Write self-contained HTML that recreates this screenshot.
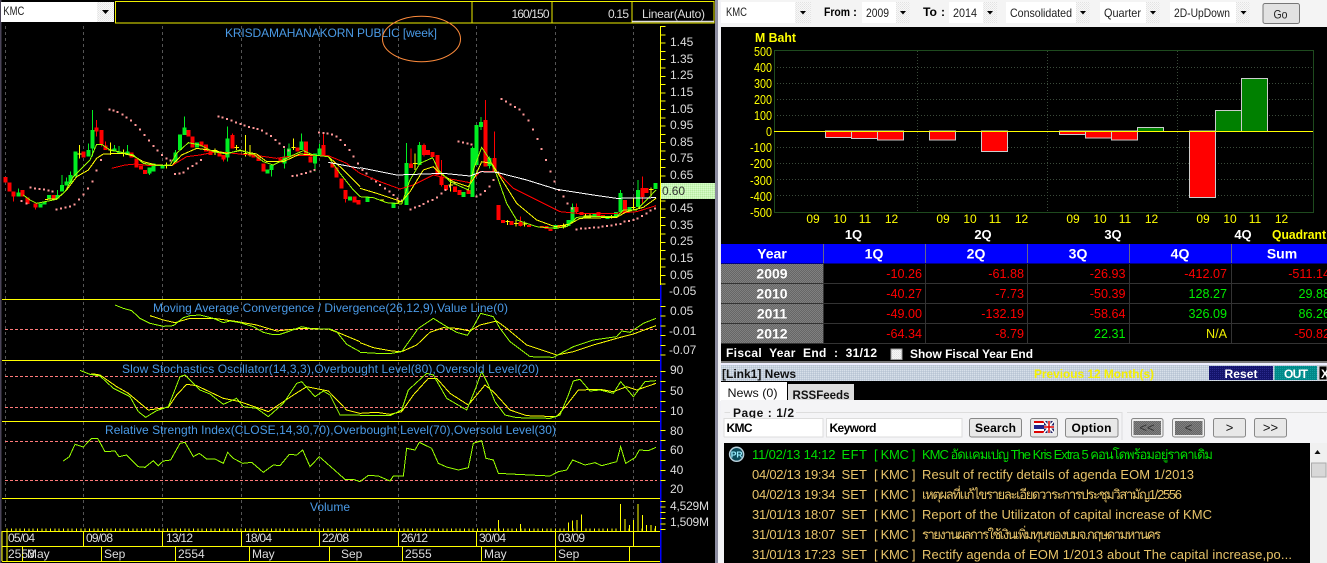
<!DOCTYPE html>
<html><head><meta charset="utf-8"><style>
html,body{margin:0;padding:0;background:#000;width:1327px;height:563px;overflow:hidden}
svg{display:block}
text{font-family:"Liberation Sans","Noto Sans CJK SC","DejaVu Sans",sans-serif;white-space:pre}
.t{fill:#4a9ae6;font-size:12px}
.a{fill:#ddd;font-size:12px}
.d{fill:#ddd;font-size:12px}
.y{fill:#ff0;font-size:13px}
.yb{fill:#ff0;font-size:12.5px;font-weight:bold}
.w{fill:#fff;font-size:14px;font-weight:bold;text-anchor:middle}
.w2{fill:#fff;font-size:13px;font-weight:bold;text-anchor:middle}
.k{fill:#222;font-size:12px}
.kb{fill:#000;font-size:12px;font-weight:bold}
.r{fill:#f00;font-size:12.6px;text-anchor:end}
.g{fill:#0e0;font-size:12.6px;text-anchor:end}
.n{fill:#e8c46a;font-size:13px}
.ng{fill:#0d0;font-size:13px}
</style></head><body>
<svg xmlns="http://www.w3.org/2000/svg" width="1327" height="563" viewBox="0 0 1327 563">
<defs>
<pattern id="gr" width="2" height="2" patternUnits="userSpaceOnUse"><rect width="2" height="2" fill="#666"/><rect width="1" height="1" fill="#808080"/><rect x="1" y="1" width="1" height="1" fill="#808080"/></pattern>
<pattern id="lg" width="2" height="2" patternUnits="userSpaceOnUse"><rect width="2" height="2" fill="#c8f5b8"/><rect width="1" height="1" fill="#b8eca0"/><rect x="1" y="1" width="1" height="1" fill="#d8fcc8"/></pattern>
<pattern id="bar" width="2" height="2" patternUnits="userSpaceOnUse"><rect width="2" height="2" fill="#c4cfdc"/><rect width="1" height="1" fill="#d8e0ea"/><rect x="1" y="1" width="1" height="1" fill="#b8c4d4"/></pattern>
<pattern id="cb" width="2" height="2" patternUnits="userSpaceOnUse"><rect width="2" height="2" fill="#f8f8f8"/><rect width="1" height="1" fill="#e2e2e2"/><rect x="1" y="1" width="1" height="1" fill="#eaeaea"/></pattern>
<pattern id="nv" width="2" height="2" patternUnits="userSpaceOnUse"><rect width="2" height="2" fill="#14146c"/><rect width="1" height="1" fill="#2a2a8c"/></pattern>
<pattern id="tl" width="2" height="2" patternUnits="userSpaceOnUse"><rect width="2" height="2" fill="#008888"/><rect width="1" height="1" fill="#10a0a0"/></pattern>
</defs>
<rect width="1327" height="563" fill="#000"/>
<!-- left top -->
<rect x="0" y="0" width="1.5" height="563" fill="#4a4458"/>
<rect x="1" y="2" width="113" height="20" fill="#fff"/>
<rect x="97" y="2" width="17" height="20" fill="url(#cb)"/>
<path d="M102 10h7l-3.500 4z" fill="#000"/>
<text x="3.300" y="15" class="k" textLength="21" lengthAdjust="spacingAndGlyphs">KMC</text>
<path d="M115.500 1.500H714V23H115.500zM472 1.500V23M552 1.500V23M632 1.500V23" fill="none" stroke="#ee0" stroke-width="1" shape-rendering="crispEdges"/>
<path d="M632 21.500H714" stroke="#ddd" stroke-width="1.500"/>
<text x="511.500" y="18" class="d" textLength="38">160/150</text>
<text x="608" y="18" class="d" textLength="21">0.15</text>
<text x="642" y="18" class="d" textLength="63">Linear(Auto)</text>
<!-- verticals -->
<path d="M5.500 26V530M83.500 26V530M162.500 26V530M241.500 26V530M319.500 26V530M398.500 26V530M476.500 26V530M555.500 26V530M633.500 26V530" stroke="#555" stroke-width="1" stroke-dasharray="3 3" shape-rendering="crispEdges"/>
<text x="225" y="37" class="t" textLength="212">KRISDAMAHANAKORN PUBLIC [week]</text>
<ellipse cx="421.500" cy="39" rx="39" ry="22.700" fill="none" stroke="#ff8c3c" stroke-width="1"/>

<!-- candles left half -->
<g transform="scale(.33333)" fill="none" shape-rendering="crispEdges">
<path stroke="#f00" stroke-width="3" d="M41 575V605M107 610V628M290 360V410M304 390V440M316 425V450M671 465V485M697 400V445M970 400V465M1036 570V608"/>
<path stroke="#f00" stroke-width="12" d="M16 531V548M28 548V575M41 575V590M68 570V590M82 592V612M107 610V623M160 585V595M250 455V472M290 383V395M304 390V433M316 437V450M395 457V472M410 475V503M423 497V508M435 510V522M566 390V410M578 410V442M605 425V440M618 433V455M632 450V465M658 455V470M671 465V478M697 405V445M760 460V472M776 470V483M790 490V515M841 475V488M893 443V455M918 425V465M932 470V488M970 435V465M997 487V503M1010 503V532M1024 535V565M1036 570V597M1063 590V607M1076 600V613"/>
<path stroke="#0e2" stroke-width="3" d="M55 565V590M173 570V595M186 525V575M199 533V557M212 515V550M265 430V470M278 330V470M343 435V455M357 438V462M383 435V465M448 503V525M526 450V487M553 350V405M683 380V485M815 495V530M854 445V505M867 430V470M905 400V450M945 460V515M958 430V465"/>
<path stroke="#0e2" stroke-width="12" d="M55 578V590M121 610V623M134 605V613M147 585V595M173 585V595M186 555V575M199 545V557M212 525V550M226 455V530M265 450V470M278 390V445M343 445V455M357 455V462M383 455V465M448 503V520M461 490V515M487 497V505M526 457V487M540 403V450M553 382V405M591 427V443M683 415V472M802 508V520M815 495V510M854 470V490M867 445V470M905 425V450M945 460V490M958 445V465M1050 590V602"/>
<path stroke="#ff0" stroke-width="3" d="M238 435V475M232 462H245M331 428V465M325 450H338M370 448V470M364 460H377M500 488V505M494 495H507M645 445V465M639 452H652M710 435V450M704 442H717M736 405V470M730 460H743M750 435V470M744 462H757M880 415V450M874 443H887"/>
<path stroke="#f99" stroke-width="6" stroke-linecap="butt" d="M62 603h6M77 610h6M89 562h6M102 565h6M115 567h6M129 569h6M142 571h6M155 575h6M167 628h6M180 626h6M194 623h6M207 620h6M221 614h6M234 598h6M247 583h6M261 565h6M274 545h6M287 512h6M300 480h6M326 328h6M337 331h6M350 336h6M364 343h6M377 352h6M390 362h6M404 375h6M417 388h6M431 405h6M444 422h6M457 438h6M470 452h6M483 465h6M496 476h6M509 482h6M522 522h6M535 520h6M548 517h6M561 505h6M574 498h6M587 490h6M600 480h6M653 350h6M665 353h6M678 357h6M691 362h6M705 367h6M718 372h6M731 377h6M744 381h6M757 384h6M770 387h6M783 392h6M797 400h6M810 408h6M823 420h6M836 430h6M849 441h6M862 452h6M875 528h6M888 526h6M902 522h6M915 519h6M928 515h6M941 510h6M954 397h6M967 399h6M980 400h6M993 404h6M1006 409h6M1019 420h6M1032 435h6M1045 450h6M1058 470h6M1071 490h6"/>
<polyline stroke="#f00" stroke-width="3" points="335,505 375,495 410,492 450,497 515,497 560,470 600,465 650,455 720,462 780,468 830,475 880,467 985,467 1040,490 1080,520"/>
<polyline stroke="#ff0" stroke-width="3" points="135,598 170,597 200,570 230,530 265,510 290,475 310,462 370,460 400,468 430,485 470,495 515,497 545,465 590,445 640,452 680,460 720,452 770,462 800,485 850,485 900,462 940,465 985,470 1020,500 1060,540 1080,560"/>
<polyline stroke="#9f0" stroke-width="3" points="70,585 90,600 110,610 135,605 170,598 195,575 220,530 250,500 270,480 290,433 305,433 330,450 370,458 400,465 430,490 470,497 510,495 530,460 565,428 600,435 640,455 680,462 720,450 760,462 790,485 820,495 850,480 880,465 910,452 940,465 985,470 1020,520 1060,570 1080,590"/>
<polyline stroke="#fff" stroke-width="3" points="985,487 1080,505"/>
</g>
<!-- candles right half -->
<g transform="translate(360 0) scale(.33333)" fill="none" shape-rendering="crispEdges">
<path stroke="#f00" stroke-width="3" d="M153 445V500M192 430V470M245 480V560M376 300V500M403 395V515M481 650V680M650 610V640M847 530V610"/>
<path stroke="#f00" stroke-width="12" d="M153 490V504M192 435V465M204 450V465M218 456V471M232 465V525M245 530V555M258 555V570M285 560V576M298 570V585M325 570V582M376 360V500M403 474V516M416 615V660M429 660V669M455 663V675M481 666V678M507 675V681M546 678V684M559 678V687M572 687V693M598 675V684M650 621V636M664 636V645M716 636V648M729 645V651M795 600V639M847 564V591M860 564V579"/>
<path stroke="#0e2" stroke-width="3" d="M140 429V615M179 426V495M338 440V590M363 351V390M389 470V505M637 610V665M781 570V635M834 540V620"/>
<path stroke="#0e2" stroke-width="12" d="M22 590V606M100 608V624M140 489V615M179 435V495M311 576V591M338 444V591M350 375V495M363 366V381M389 474V498M586 675V687M625 660V678M637 621V666M703 639V651M742 648V657M768 636V648M781 579V636M808 621V636M834 570V621M886 549V567"/>
<path stroke="#ff0" stroke-width="3" d="M165 460V510M159 490H172M272 535V575M266 555H279M442 660V675M436 665H449M468 660V680M462 670H475M494 665V680M488 672H501M611 670V685M605 678H618M677 640V655M671 648H684M690 640V655M684 648H697M755 645V655M749 650H762M820 593V630M814 622H827M873 562V590M867 568H880M60 600H72M115 600V612M109 606H122"/>
<path stroke="#f99" stroke-width="6" d="M5 510h6M17 520h6M32 535h6M45 545h6M57 555h6M72 565h6M85 575h6M97 585h6M110 595h6M123 602h6M149 628h6M162 622h6M175 618h6M188 612h6M201 605h6M215 600h6M228 592h6M241 580h6M254 570h6M267 560h6M280 550h6M293 424h6M306 428h6M319 431h6M332 433h6M346 590h6M359 583h6M372 573h6M385 560h6M398 540h6M411 518h6M422 297h6M435 304h6M448 313h6M462 321h6M475 328h6M488 344h6M502 361h6M516 388h6M529 417h6M542 447h6M555 480h6M568 515h6M581 545h6M594 570h6M607 590h6M620 610h6M633 625h6M647 688h6M660 686h6M673 685h6M686 684h6M699 683h6M712 682h6M725 680h6M738 678h6M751 676h6M765 674h6M778 672h6M791 665h6M804 663h6M817 660h6M830 655h6M843 648h6M856 640h6M869 632h6M882 625h6"/>
<polyline stroke="#f00" stroke-width="3" points="0,520 60,545 120,567 160,555 220,525 260,535 330,548 360,515 410,515 460,565 540,605 600,635 650,640 770,640 830,635 888,617"/>
<polyline stroke="#ff0" stroke-width="3" points="0,565 50,580 125,605 150,575 190,510 220,500 240,520 280,545 325,560 345,530 365,485 395,490 420,530 470,610 530,660 585,680 630,672 660,655 770,652 800,635 850,622 888,595"/>
<polyline stroke="#9f0" stroke-width="3" points="0,590 40,593 80,608 125,612 150,540 180,490 218,473 235,510 270,545 325,570 340,510 365,442 390,480 410,525 440,610 470,660 530,680 585,685 620,680 650,652 700,650 770,650 790,630 830,630 860,600 888,570"/>
<polyline stroke="#fff" stroke-width="3" points="0,503 110,525 250,520 330,528 365,515 410,517 500,540 590,568 700,585 770,595 888,593"/>
</g>

<!-- indicator panels -->
<path d="M5 329.500H657M5 376.500H657M5 407.500H657M5 441.500H657M5 480.500H657" stroke="#ff7a7a" stroke-width="1" stroke-dasharray="3 2" shape-rendering="crispEdges"/>
<path d="M2 299.500H660M2 360.500H660M2 421.500H660M2 498.500H660M2 531.500H660M2 546.500H660M2 561.500H660" stroke="#ff0" stroke-width="1" shape-rendering="crispEdges"/>
<path d="M2 531V561M7 531V561M83.500 531V546M162.500 531V546M241.500 531V546M319.500 531V546M398.500 531V546M476.500 531V546M555.500 531V546M633.500 531V546M22.500 546V561M101.500 546V561M175.500 546V561M249.500 546V561M329.500 546V561M402.500 546V561M481.500 546V561M555.500 546V561M629.500 546V561" stroke="#ff0" stroke-width="1" shape-rendering="crispEdges"/>
<g transform="translate(0 295) scale(.33333)" fill="none" shape-rendering="crispEdges" stroke-width="3">
<polyline stroke="#ff0" points="450,62 490,75 525,83 570,70 640,70 700,78 770,90 830,108 905,100 985,102 1020,115 1080,140"/>
<polyline stroke="#9f0" points="345,30 370,40 395,47 420,70 450,85 490,94 520,92 550,68 570,62 600,60 640,70 670,83 690,78 720,83 760,95 790,112 815,118 840,118 870,108 905,95 940,102 990,102 1010,110 1040,148 1080,170"/>
<polyline stroke="#ff0" points="275,236 300,240 350,275 385,295 445,345 505,337 530,300 560,268 590,272 670,310 720,320 805,350 880,300 920,275 985,288 1040,345 1080,355"/>
<polyline stroke="#9f0" points="240,226 270,238 300,243 340,280 390,305 415,350 437,367 470,347 505,335 540,245 555,240 580,265 600,285 630,297 670,328 710,310 730,335 770,340 805,365 850,325 890,265 905,260 945,305 970,288 990,300 1020,360 1080,360"/>
<polyline stroke="#9f0" points="190,498 208,485 225,448 250,456 275,430 293,430 315,470 345,468 357,485 380,480 415,515 435,517 460,497 475,512 490,498 512,495 540,445 555,442 580,485 598,475 620,492 645,492 670,505 683,472 700,490 728,505 755,502 790,532 820,510 840,512 868,478 890,480 908,465 930,515 958,485 1035,553 1060,553 1080,560"/>
<path stroke="#ff0" stroke-width="8" stroke-dasharray="3 10" d="M20 704H1080"/>
</g>
<g transform="translate(360 295) scale(.33333)" fill="none" shape-rendering="crispEdges" stroke-width="3">
<polyline stroke="#ff0" points="0,143 40,158 95,168 125,170 170,150 210,112 250,98 290,100 330,108 360,90 410,78 440,100 500,150 590,180 640,170 700,150 770,130 820,117 888,92"/>
<polyline stroke="#9f0" points="0,172 50,175 95,175 125,170 150,135 175,100 220,70 255,92 290,112 322,121 340,95 362,55 400,65 420,100 450,140 510,185 580,187 640,155 700,135 770,125 785,108 810,112 850,85 888,70"/>
<polyline stroke="#ff0" points="0,355 50,352 90,358 125,350 160,300 205,250 230,250 270,295 325,330 375,270 400,290 450,345 500,362 590,365 620,330 655,285 720,283 760,290 800,275 830,285 888,265"/>
<polyline stroke="#9f0" points="0,362 90,362 125,345 145,285 200,235 220,240 260,310 320,345 345,285 365,230 385,270 405,320 435,360 470,368 570,370 600,360 625,300 640,258 660,253 690,288 720,285 760,295 782,260 820,305 855,260 888,257"/>
<polyline stroke="#9f0" points="0,560 25,541 55,543 90,558 100,543 130,543 140,460 165,465 178,442 215,460 235,505 260,516 295,525 325,518 340,445 365,437 378,490 400,495 415,535 470,538 570,543 595,530 620,525 638,495 675,510 705,503 725,512 770,500 782,455 797,505 825,488 838,465 865,467 888,457"/>
<path stroke="#ff0" d="M0 704H890" stroke-width="8" stroke-dasharray="3 10"/>
<path stroke="#ff0" d="M415 708V675M481 708V687M625 708V682M638 708V677M651 708V675M664 708V658M781 708V627M795 708V672M808 708V690M820 708V675M834 708V627M847 708V660M860 708V690M873 708V690M886 708V693"/>
</g>
<text x="153" y="312" class="t" textLength="355">Moving Average Convergence / Divergence(26,12,9),Value Line(0)</text>
<text x="122" y="373" class="t" textLength="417">Slow Stochastics Oscillator(14,3,3),Overbought Level(80),Oversold Level(20)</text>
<text x="105" y="434" class="t" textLength="451">Relative Strength Index(CLOSE,14,30,70),Overbought Level(70),Oversold Level(30)</text>
<text x="310" y="511" class="t" textLength="40">Volume</text>
<g class="d">
<text x="8" y="542" class="d" textLength="27">05/04</text><text x="86" y="542" class="d" textLength="27">09/08</text><text x="166" y="542" class="d" textLength="27">13/12</text><text x="245" y="542" class="d" textLength="27">18/04</text><text x="322" y="542" class="d" textLength="27">22/08</text><text x="401" y="542" class="d" textLength="27">26/12</text><text x="479" y="542" class="d" textLength="27">30/04</text><text x="558" y="542" class="d" textLength="27">03/09</text>
<text x="8" y="558" class="d">2553</text><text x="27" y="558" class="d">May</text><text x="104" y="558" class="d">Sep</text><text x="178" y="558" class="d">2554</text><text x="252" y="558" class="d">May</text><text x="341" y="558" class="d">Sep</text><text x="405" y="558" class="d">2555</text><text x="484" y="558" class="d">May</text><text x="558" y="558" class="d">Sep</text>
</g>
<!-- axis -->
<path d="M660.500 26V285" stroke="#ff0" stroke-width="1" shape-rendering="crispEdges"/>
<path d="M660.500 285V563" stroke="#00f" stroke-width="1.500" shape-rendering="crispEdges"/>
<path d="M663 26V285" stroke="#ff0" stroke-width="5" stroke-dasharray="1 7.300" shape-rendering="crispEdges"/>
<path d="M663 306V359" stroke="#ff0" stroke-width="5" stroke-dasharray="1 8.700" shape-rendering="crispEdges"/>
<path d="M663 371V418" stroke="#ff0" stroke-width="5" stroke-dasharray="1 9" shape-rendering="crispEdges"/>
<path d="M663 430V490" stroke="#ff0" stroke-width="5" stroke-dasharray="1 9" shape-rendering="crispEdges"/>
<path d="M663 501V530" stroke="#ff0" stroke-width="5" stroke-dasharray="1 4.600" shape-rendering="crispEdges"/>
<rect x="661" y="183" width="55" height="16" fill="url(#lg)"/>
<text x="662" y="195" font-size="12" fill="#333" textLength="23">0.60</text>
<g class="a">
<text x="670" y="46" class="a">1.45</text><text x="670" y="63" class="a">1.35</text><text x="670" y="79" class="a">1.25</text><text x="670" y="96" class="a">1.15</text><text x="670" y="113" class="a">1.05</text><text x="670" y="129" class="a">0.95</text><text x="670" y="146" class="a">0.85</text><text x="670" y="162" class="a">0.75</text><text x="670" y="179" class="a">0.65</text><text x="670" y="212" class="a">0.45</text><text x="670" y="229" class="a">0.35</text><text x="670" y="245" class="a">0.25</text><text x="670" y="262" class="a">0.15</text><text x="670" y="279" class="a">0.05</text><text x="669" y="295" class="a">-0.05</text>
<text x="670" y="315" class="a">0.05</text><text x="669" y="335" class="a">-0.01</text><text x="669" y="354" class="a">-0.07</text>
<text x="670" y="374" class="a">90</text><text x="670" y="395" class="a">50</text><text x="670" y="415" class="a">10</text>
<text x="670" y="435" class="a">80</text><text x="670" y="454" class="a">60</text><text x="670" y="474" class="a">40</text><text x="670" y="493" class="a">20</text>
<text x="670" y="510" class="a" textLength="39">4,529M</text><text x="670" y="526" class="a" textLength="39">1,509M</text>
</g>
<!-- separator -->
<rect x="715" y="0" width="3" height="563" fill="#8c8ca0"/>
<rect x="718" y="0" width="3" height="563" fill="#f2f2f6"/>

<!-- right top bar -->
<rect x="721" y="0" width="606" height="27" fill="#f4f4f4"/>
<rect x="721" y="2" width="74" height="21" fill="#fff"/>
<rect x="795" y="2" width="16" height="21" fill="url(#cb)"/>
<rect x="862" y="2" width="34" height="21" fill="#fff"/><rect x="896" y="2" width="14" height="21" fill="url(#cb)"/>
<rect x="949" y="2" width="34" height="21" fill="#fff"/><rect x="983" y="2" width="14" height="21" fill="url(#cb)"/>
<rect x="1006" y="2" width="70" height="21" fill="#fff"/><rect x="1076" y="2" width="14" height="21" fill="url(#cb)"/>
<rect x="1100" y="2" width="46" height="21" fill="#fff"/><rect x="1146" y="2" width="14" height="21" fill="url(#cb)"/>
<rect x="1170" y="2" width="66" height="21" fill="#fff"/><rect x="1236" y="2" width="14" height="21" fill="url(#cb)"/>
<path d="M800 11h6l-3 3.500zM900 11h6l-3 3.500zM987 11h6l-3 3.500zM1080 11h6l-3 3.500zM1150 11h6l-3 3.500zM1240.500 11h6l-3 3.500z" fill="#000"/>
<text x="726" y="16" class="k" textLength="21" lengthAdjust="spacingAndGlyphs">KMC</text>
<text x="824" y="16" class="kb" textLength="26" lengthAdjust="spacingAndGlyphs">From</text><text x="853" y="16" class="kb">:</text>
<text x="866" y="17" class="k" textLength="23" lengthAdjust="spacingAndGlyphs">2009</text>
<text x="923" y="16" class="kb" textLength="14" lengthAdjust="spacingAndGlyphs">To</text><text x="941" y="16" class="kb">:</text>
<text x="953" y="17" class="k" textLength="24" lengthAdjust="spacingAndGlyphs">2014</text>
<text x="1010" y="17" class="k" textLength="62" lengthAdjust="spacingAndGlyphs">Consolidated</text>
<text x="1104" y="17" class="k" textLength="37" lengthAdjust="spacingAndGlyphs">Quarter</text>
<text x="1174" y="17" class="k" textLength="56" lengthAdjust="spacingAndGlyphs">2D-UpDown</text>
<rect x="1263" y="3.500" width="36.500" height="20" rx="2" fill="#e2e2e2" stroke="#777"/>
<text x="1273.500" y="18.500" class="k" textLength="14" lengthAdjust="spacingAndGlyphs">Go</text>
<rect x="721" y="27" width="606" height="216" fill="#000"/>

<!-- bar chart -->
<g stroke="#1e4a1e" stroke-width="1" shape-rendering="crispEdges" fill="none">
<path stroke="#3a4a3a" stroke-dasharray="1 2" d="M774 67.500H1313M774 83.500H1313M774 99.500H1313M774 115.500H1313M774 147.500H1313M774 163.500H1313M774 179.500H1313M774 195.500H1313M917.500 51V212M1047.500 51V212M1177.500 51V212"/>
<path d="M774.500 50.500H1313.500V212.500H774.500z"/>
</g>
<g stroke="#ccc" stroke-width="1">
<g fill="#f00"><rect x="825.500" y="131" width="26" height="6.500"/><rect x="851.500" y="131" width="26" height="7.500"/><rect x="877.500" y="131" width="26" height="9"/><rect x="929.500" y="131" width="26" height="9"/><rect x="981.500" y="131" width="26" height="20.500"/><rect x="1059.500" y="131" width="26" height="3.500"/><rect x="1085.500" y="131" width="26" height="7"/><rect x="1111.500" y="131" width="26" height="9"/><rect x="1189.500" y="131" width="26" height="66.500"/></g>
<g fill="#008000"><rect x="1137.500" y="127.500" width="26" height="4"/><rect x="1215.500" y="110.500" width="26" height="21"/><rect x="1241.500" y="78.500" width="26" height="53"/></g>
</g>
<path d="M774 131.500H1313" stroke="#ff0" stroke-width="1" shape-rendering="crispEdges"/>
<g font-size="13" fill="#ff0" text-anchor="end">
<text x="772" y="56" textLength="18" lengthAdjust="spacingAndGlyphs">500</text><text x="772" y="72" textLength="18" lengthAdjust="spacingAndGlyphs">400</text><text x="772" y="88" textLength="18" lengthAdjust="spacingAndGlyphs">300</text><text x="772" y="104" textLength="18" lengthAdjust="spacingAndGlyphs">200</text><text x="772" y="120" textLength="18" lengthAdjust="spacingAndGlyphs">100</text><text x="772" y="136" textLength="6" lengthAdjust="spacingAndGlyphs">0</text><text x="772" y="152" textLength="22" lengthAdjust="spacingAndGlyphs">-100</text><text x="772" y="168" textLength="22" lengthAdjust="spacingAndGlyphs">-200</text><text x="772" y="185" textLength="22" lengthAdjust="spacingAndGlyphs">-300</text><text x="772" y="201" textLength="22" lengthAdjust="spacingAndGlyphs">-400</text><text x="772" y="217" textLength="22" lengthAdjust="spacingAndGlyphs">-500</text>
</g>
<g font-size="12" fill="#ff0" text-anchor="middle">
<text x="813" y="223">09</text><text x="840" y="223">10</text><text x="865" y="223">11</text><text x="891.500" y="223">12</text>
<text x="943" y="223">09</text><text x="970" y="223">10</text><text x="995" y="223">11</text><text x="1021.500" y="223">12</text>
<text x="1073" y="223">09</text><text x="1100" y="223">10</text><text x="1125" y="223">11</text><text x="1151.500" y="223">12</text>
<text x="1203" y="223">09</text><text x="1230" y="223">10</text><text x="1255" y="223">11</text><text x="1281.500" y="223">12</text>
</g>
<text x="853.500" y="239" class="w2">1Q</text><text x="983" y="239" class="w2">2Q</text><text x="1113" y="239" class="w2">3Q</text><text x="1243" y="239" class="w2">4Q</text>
<text x="1272" y="239" class="yb" textLength="54" lengthAdjust="spacingAndGlyphs">Quadrant</text>
<text x="755" y="42" class="yb" textLength="41" lengthAdjust="spacingAndGlyphs">M Baht</text>

<!-- table -->
<rect x="721" y="244" width="606" height="19.500" fill="#00f"/>
<rect x="721" y="264" width="102" height="79" fill="url(#gr)"/>
<path d="M721 283.500H1327M721 303.500H1327M721 323.500H1327M721 343.500H1327M823.500 244V343M925.500 264V343M1027.500 264V343M1129.500 264V343M1231.500 264V343" stroke="#333" stroke-width="1" shape-rendering="crispEdges"/>
<path d="M823.500 244V263M925.500 244V263M1027.500 244V263M1129.500 244V263M1231.500 244V263" stroke="#668" stroke-width="1" shape-rendering="crispEdges"/>
<text x="772" y="258.500" class="w">Year</text><text x="874" y="258.500" class="w">1Q</text><text x="976" y="258.500" class="w">2Q</text><text x="1078" y="258.500" class="w">3Q</text><text x="1180" y="258.500" class="w">4Q</text><text x="1282" y="258.500" class="w">Sum</text>
<text x="772" y="278.500" class="w">2009</text><text x="772" y="298.500" class="w">2010</text><text x="772" y="318.500" class="w">2011</text><text x="772" y="338.500" class="w">2012</text>
<text x="922" y="278" class="r">-10.26</text><text x="1024" y="278" class="r">-61.88</text><text x="1125.500" y="278" class="r">-26.93</text><text x="1227" y="278" class="r">-412.07</text><text x="1330" y="278" class="r">-511.14</text>
<text x="922" y="298" class="r">-40.27</text><text x="1024" y="298" class="r">-7.73</text><text x="1125.500" y="298" class="r">-50.39</text><text x="1227" y="298" class="g">128.27</text><text x="1330" y="298" class="g">29.88</text>
<text x="922" y="318" class="r">-49.00</text><text x="1024" y="318" class="r">-132.19</text><text x="1125.500" y="318" class="r">-58.64</text><text x="1227" y="318" class="g">326.09</text><text x="1330" y="318" class="g">86.26</text>
<text x="922" y="338" class="r">-64.34</text><text x="1024" y="338" class="r">-8.79</text><text x="1125.500" y="338" class="g">22.31</text><text x="1227" y="338" font-size="12.6" fill="#ee0" text-anchor="end">N/A</text><text x="1330" y="338" class="r">-50.82</text>
<text x="726" y="357" font-size="12" font-weight="bold" fill="#fff" textLength="151" lengthAdjust="spacing">Fiscal  Year  End  :  31/12</text>
<rect x="891" y="349" width="11" height="10.500" fill="url(#cb)" stroke="#999"/>
<text x="910" y="358" font-size="12" font-weight="bold" fill="#fff" textLength="123" lengthAdjust="spacingAndGlyphs">Show Fiscal Year End</text>

<!-- news header -->
<rect x="721" y="361" width="606" height="2" fill="#777"/>
<rect x="721" y="363" width="606" height="2" fill="#eef"/>
<rect x="721" y="365" width="606" height="16" fill="url(#bar)"/>
<text x="722" y="378" font-size="12" font-weight="bold" fill="#111" textLength="74" lengthAdjust="spacingAndGlyphs">[Link1] News</text>
<text x="1034" y="378" font-size="12" font-weight="bold" fill="#f4f000" textLength="120" lengthAdjust="spacingAndGlyphs">Previous 12 Month(s)</text>
<rect x="1209" y="366" width="64" height="14" fill="url(#nv)"/>
<text x="1241" y="378" font-size="12" font-weight="bold" fill="#fff" text-anchor="middle" textLength="33">Reset</text>
<rect x="1274.500" y="366" width="42.500" height="14" fill="url(#tl)"/>
<text x="1296" y="378" font-size="12" font-weight="bold" fill="#fff" text-anchor="middle" textLength="24">OUT</text>
<rect x="1319" y="366" width="8" height="14" fill="#000" stroke="#ccc"/>
<text x="1321" y="378" font-size="12" font-weight="bold" fill="#fff">X</text>
<rect x="721" y="381" width="606" height="19.500" fill="#000"/>
<rect x="720" y="382" width="67" height="19" fill="#fff"/>
<rect x="788" y="384" width="66" height="17" fill="#dcdcdc"/>
<text x="727.500" y="397" font-size="12" fill="#111" textLength="50" lengthAdjust="spacingAndGlyphs">News (0)</text>
<text x="792.500" y="399" font-size="12" fill="#111" font-weight="bold" textLength="57" lengthAdjust="spacingAndGlyphs">RSSFeeds</text>

<!-- news toolbar -->
<rect x="721" y="400" width="606" height="43" fill="#f4f4f6"/>
<path d="M724.500 412.500H730M796 412.500H1122V440M1127 412.500H1327" fill="none" stroke="#ddd" stroke-width="1"/>
<text x="733" y="417" font-size="12" font-weight="bold" fill="#111" textLength="61">Page : 1/2</text>
<rect x="724" y="418.500" width="99" height="18.500" fill="#fff" stroke="#ddd"/>
<rect x="826.500" y="418.500" width="135.500" height="18.500" fill="#fff" stroke="#ddd"/>
<text x="726.500" y="432" class="kb" textLength="26">KMC</text>
<text x="829.500" y="432" class="kb" textLength="47">Keyword</text>
<g fill="#e8e8e8" stroke="#888" stroke-width="1">
<rect x="969.500" y="418.500" width="52" height="18.500" rx="2"/>
<rect x="1030.500" y="418.500" width="27" height="18.500" rx="2"/>
<rect x="1065.500" y="418.500" width="52.500" height="18.500" rx="2"/>
<rect x="1131.500" y="418.500" width="31.500" height="18.500" rx="2" fill="#eee"/>
<rect x="1172.500" y="418.500" width="32" height="18.500" rx="2" fill="#eee"/>
<rect x="1213.500" y="418.500" width="32" height="18.500" rx="2"/>
<rect x="1254.500" y="418.500" width="32" height="18.500" rx="2"/>
</g>
<rect x="1133.500" y="421" width="27.500" height="14" fill="url(#gr)"/>
<rect x="1175" y="421" width="27.500" height="14" fill="url(#gr)"/>
<text x="975" y="432" class="kb" textLength="41">Search</text>
<text x="1071.500" y="432" class="kb" textLength="40">Option</text>
<text x="1147" y="432" font-size="13" fill="#333" text-anchor="middle">&lt;&lt;</text>
<text x="1188.500" y="432" font-size="13" fill="#333" text-anchor="middle">&lt;</text>
<text x="1229.500" y="432" font-size="13" fill="#111" text-anchor="middle">&gt;</text>
<text x="1270.500" y="432" font-size="13" fill="#111" text-anchor="middle">&gt;&gt;</text>
<!-- flag -->
<rect x="1034" y="421" width="10" height="12" fill="#d00"/><rect x="1034" y="423" width="10" height="8" fill="#fff"/><rect x="1034" y="425" width="10" height="4" fill="#228"/>
<rect x="1044" y="421" width="10" height="12" fill="#226"/><path d="M1044 421l10 12M1054 421l-10 12" stroke="#fff" stroke-width="1.500"/><path d="M1049 421v12M1044 427h10" stroke="#fff" stroke-width="3"/><path d="M1049 421v12M1044 427h10" stroke="#d00" stroke-width="1.500"/>

<!-- news list -->
<rect x="720" y="437" width="4" height="126" fill="#f4f4f6"/>
<rect x="724" y="443" width="586" height="120" fill="#000"/>
<rect x="1310" y="443" width="17" height="120" fill="#f0f0f0"/>
<path d="M1314.500 454h6l-3 -4z" fill="#111"/>
<rect x="1311.500" y="463" width="14.500" height="14" fill="#d8d8d8" stroke="#aaa"/>
<circle cx="736.600" cy="454.300" r="7" fill="#0a4a5a" stroke="#b8d0dc" stroke-width="1.500"/>
<text x="736.600" y="457.500" font-size="8.500" font-weight="bold" fill="#9ef" text-anchor="middle">PR</text>
<text x="752" y="459" class="ng" textLength="83.500">11/02/13 14:12</text><text x="841.500" y="459" class="ng" textLength="25.500">EFT</text><text x="874" y="459" class="ng" textLength="41.500">[ KMC ]</text>
<text x="922" y="459" class="ng" textLength="291">KMC อัดแคมเปญ The Kris Extra 5 คอนโดพร้อมอยู่ราคาเดิม</text>
<text x="752" y="479" class="n" textLength="83.500">04/02/13 19:34</text><text x="841.500" y="479" class="n" textLength="25.500">SET</text><text x="874" y="479" class="n" textLength="41.500">[ KMC ]</text>
<text x="922" y="479" class="n" textLength="272">Result of rectify details of agenda EOM 1/2013</text>
<text x="752" y="499" class="n" textLength="83.500">04/02/13 19:34</text><text x="841.500" y="499" class="n" textLength="25.500">SET</text><text x="874" y="499" class="n" textLength="41.500">[ KMC ]</text>
<text x="922" y="499" class="n" textLength="260">เหตุผลที่แก้ไขรายละเอียดวาระการประชุมวิสามัญ1/2556</text>
<text x="752" y="519" class="n" textLength="83.500">31/01/13 18:07</text><text x="841.500" y="519" class="n" textLength="25.500">SET</text><text x="874" y="519" class="n" textLength="41.500">[ KMC ]</text>
<text x="922" y="519" class="n" textLength="290">Report of the Utilizaton of capital increase of KMC</text>
<text x="752" y="539" class="n" textLength="83.500">31/01/13 18:07</text><text x="841.500" y="539" class="n" textLength="25.500">SET</text><text x="874" y="539" class="n" textLength="41.500">[ KMC ]</text>
<text x="922" y="539" class="n" textLength="239">รายงานผลการใช้เงินเพิ่มทุนของบมจ.กฤษดามหานคร</text>
<text x="752" y="559" class="n" textLength="83.500">31/01/13 17:23</text><text x="841.500" y="559" class="n" textLength="25.500">SET</text><text x="874" y="559" class="n" textLength="41.500">[ KMC ]</text>
<text x="922" y="559" class="n" textLength="370">Rectify agenda of EOM 1/2013 about The capital increase,po...</text>
</svg>
</body></html>
